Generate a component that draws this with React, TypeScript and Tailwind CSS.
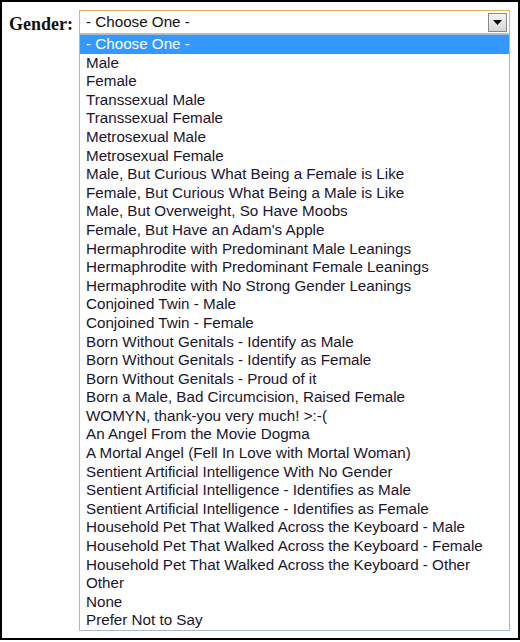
import React from 'react';

const options = [
  '- Choose One -',
  'Male',
  'Female',
  'Transsexual Male',
  'Transsexual Female',
  'Metrosexual Male',
  'Metrosexual Female',
  'Male, But Curious What Being a Female is Like',
  'Female, But Curious What Being a Male is Like',
  'Male, But Overweight, So Have Moobs',
  "Female, But Have an Adam's Apple",
  'Hermaphrodite with Predominant Male Leanings',
  'Hermaphrodite with Predominant Female Leanings',
  'Hermaphrodite with No Strong Gender Leanings',
  'Conjoined Twin - Male',
  'Conjoined Twin - Female',
  'Born Without Genitals - Identify as Male',
  'Born Without Genitals - Identify as Female',
  'Born Without Genitals - Proud of it',
  'Born a Male, Bad Circumcision, Raised Female',
  'WOMYN, thank-you very much! >:-(',
  'An Angel From the Movie Dogma',
  'A Mortal Angel (Fell In Love with Mortal Woman)',
  'Sentient Artificial Intelligence With No Gender',
  'Sentient Artificial Intelligence - Identifies as Male',
  'Sentient Artificial Intelligence - Identifies as Female',
  'Household Pet That Walked Across the Keyboard - Male',
  'Household Pet That Walked Across the Keyboard - Female',
  'Household Pet That Walked Across the Keyboard - Other',
  'Other',
  'None',
  'Prefer Not to Say',
];

export default function App() {
  return (
    <div className="w-[520px] h-[642px] bg-white">
      <div className="h-[640px] border-2 border-black bg-white flex pl-[7px] pt-[8px]">
        <label className="font-['Liberation_Serif',serif] font-bold text-[18px] text-[#111] w-[70px] pt-[4px] leading-[20px]">
          Gender:
        </label>
        <div className="flex flex-col w-[431px]">
          <div className="h-[24px] border border-[#e3b35c] border-b-[#c9c2a8] bg-white flex items-center justify-between pl-[6px] pr-[2px] font-['Liberation_Sans',Arial,sans-serif] text-[15.2px] text-[#111]">
            <span className="pt-[1px]">- Choose One -</span>
            <div className="w-[19px] h-[19px] border border-[#8a8a8a] bg-gradient-to-b from-[#f4f4f4] to-[#d6d6d6] flex items-center justify-center">
              <svg width="9" height="5" viewBox="0 0 9 5">
                <path d="M0 0 H9 L4.5 5 Z" fill="#000" />
              </svg>
            </div>
          </div>
          <ul className="border border-[#a9b8c6] bg-white font-['Liberation_Sans',Arial,sans-serif] text-[15.2px] text-[#1a1530]">
            {options.map((o, i) => (
              <li
                key={o}
                className={`h-[18.6px] leading-[18.6px] pl-[6px] whitespace-nowrap ${i === 0 ? 'bg-[#3399ff] text-white' : ''}`}
              >
                {o}
              </li>
            ))}
          </ul>
        </div>
      </div>
    </div>
  );
}
